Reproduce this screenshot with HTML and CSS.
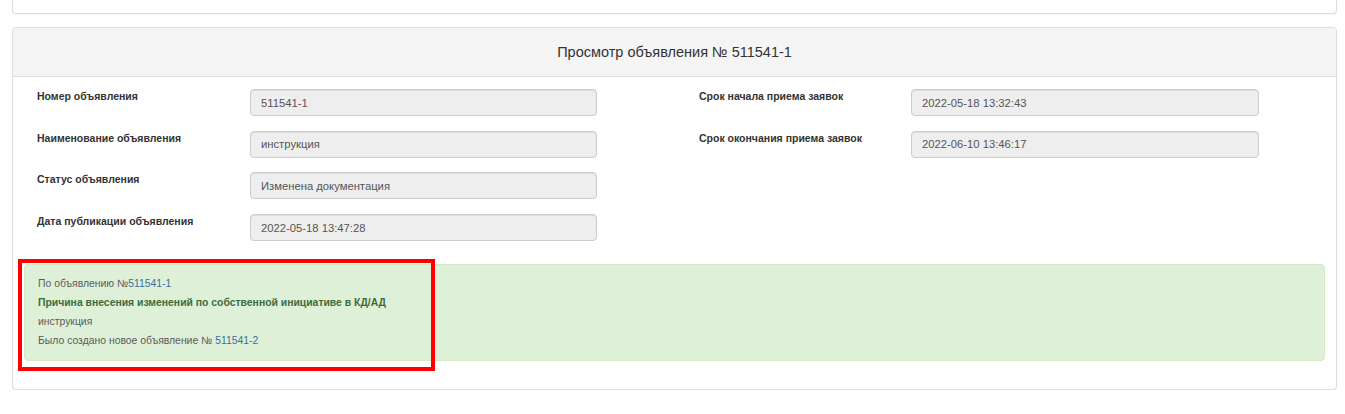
FILE: index.html
```html
<!DOCTYPE html>
<html lang="ru">
<head>
<meta charset="utf-8">
<title>Просмотр объявления</title>
<link rel="stylesheet" href="styles.css">
</head>
<body>
<div class="page">
  <div class="panel panel-top"></div>
  <div class="panel panel-main">
    <div class="panel-heading">Просмотр объявления № 511541-1</div>
    <div class="panel-body">
      <div class="fields">
        <div class="col">
          <div class="row"><div class="label">Номер объявления</div><div class="input">511541-1</div></div>
          <div class="row"><div class="label">Наименование объявления</div><div class="input">инструкция</div></div>
          <div class="row"><div class="label">Статус объявления</div><div class="input">Изменена документация</div></div>
          <div class="row"><div class="label">Дата публикации объявления</div><div class="input">2022-05-18 13:47:28</div></div>
        </div>
        <div class="col col-right">
          <div class="row"><div class="label">Срок начала приема заявок</div><div class="input">2022-05-18 13:32:43</div></div>
          <div class="row"><div class="label">Срок окончания приема заявок</div><div class="input">2022-06-10 13:46:17</div></div>
        </div>
      </div>
      <div class="alert">
        <div>По объявлению №<a href="#">511541-1</a></div>
        <div class="strong">Причина внесения изменений по собственной инициативе в КД/АД</div>
        <div>инструкция</div>
        <div>Было создано новое объявление № <a href="#">511541-2</a></div>
      </div>
    </div>
  </div>
  <div class="annotation"></div>
</div>
</body>
</html>
```

FILE: styles.css
```css
html, body {
  margin: 0;
  padding: 0;
  background: #fff;
}
body {
  font-family: "Liberation Sans", Arial, sans-serif;
  color: #333;
}
.page {
  position: relative;
  padding: 0 8px 0 12px;
  width: 1325px;
}
.panel {
  background: #fff;
  border: 1px solid #ddd;
  border-radius: 4px;
  box-shadow: 0 1px 1px rgba(0, 0, 0, 0.05);
}
.panel-top {
  height: 13px;
  border-top: none;
  border-radius: 0 0 4px 4px;
  margin-bottom: 13px;
}
.panel-heading {
  background: #f5f5f5;
  border-bottom: 1px solid #ddd;
  border-radius: 3px 3px 0 0;
  height: 48px;
  display: flex;
  align-items: center;
  justify-content: center;
  font-size: 14.5px;
  color: #333;
}
.panel-body {
  padding: 12px 11px 28px 11px;
}
.fields {
  display: grid;
  grid-template-columns: 662px 1fr;
  padding-left: 13px;
}
.col {
  display: flex;
  flex-direction: column;
  gap: 14.7px;
}
.row {
  display: grid;
  grid-template-columns: 213px 347px;
}
.col-right .row {
  grid-template-columns: 212px 348px;
}
.label {
  font-size: 10.5px;
  font-weight: bold;
  color: #333;
  padding-top: 1px;
  line-height: 13px;
}
.input {
  box-sizing: border-box;
  height: 27px;
  background: #eee;
  border: 1px solid #ccc;
  border-radius: 4px;
  box-shadow: inset 0 1px 1px rgba(0, 0, 0, 0.075);
  padding: 0 9px 0 10px;
  display: flex;
  align-items: center;
  font-size: 11.25px;
  color: #555;
}
.alert {
  margin-top: 23px;
  background: #dff0d8;
  border: 1px solid #d6e9c6;
  border-radius: 4px;
  padding: 9px 14px 10px 13px;
  font-size: 10.4px;
  line-height: 19px;
  color: #5b5b5b;
}
.alert .strong {
  font-weight: bold;
  color: #3c6b3d;
}
.alert a {
  color: #3a6f9e;
  text-decoration: none;
}
.annotation {
  position: absolute;
  left: 18px;
  top: 259px;
  width: 409px;
  height: 104px;
  border: 4px solid #ff0000;
}
```
